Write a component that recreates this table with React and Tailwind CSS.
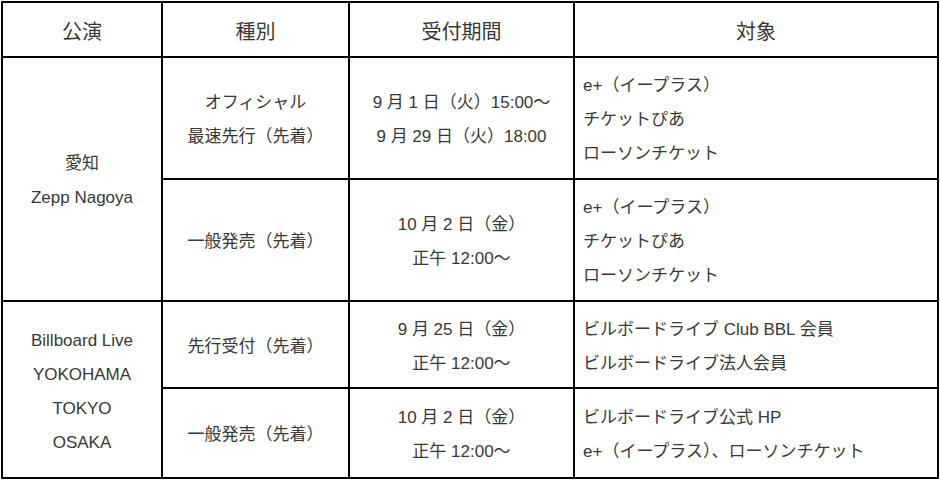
import React from "react";

const F = { fontFamily: '"Liberation Sans", "Noto Sans CJK JP", "Noto Sans", sans-serif' };

function Lines({ items }) {
  return (
    <div className="flex flex-col">
      {items.map((t, i) => (
        <div key={i} className="leading-[34px] whitespace-nowrap">{t}</div>
      ))}
    </div>
  );
}

export default function App() {
  const td = "border-2 border-black align-middle px-0 pt-1 pb-0";
  return (
    <div className="w-[940px] h-[482px] bg-white pl-px pt-px">
      <table
        className="border-collapse table-fixed w-[936px] text-[#383838] text-[17px]"
        style={F}
      >
        <colgroup>
          <col className="w-[160px]" />
          <col className="w-[187px]" />
          <col className="w-[225px]" />
          <col className="w-[364px]" />
        </colgroup>
        <tbody>
          <tr className="h-[55px] text-[20px] text-center">
            <td className={td}>公演</td>
            <td className={td}>種別</td>
            <td className={td}>受付期間</td>
            <td className={td}>対象</td>
          </tr>
          <tr className="h-[122px]">
            <td rowSpan={2} className={td + " text-center"}>
              <Lines items={["愛知", "Zepp Nagoya"]} />
            </td>
            <td className={td + " text-center"}>
              <Lines items={["オフィシャル", "最速先行（先着）"]} />
            </td>
            <td className={td + " text-center"}>
              <Lines items={["9 月 1 日（火）15:00～", "9 月 29 日（火）18:00"]} />
            </td>
            <td className={td + " pl-2"}>
              <Lines items={["e+（イープラス）", "チケットぴあ", "ローソンチケット"]} />
            </td>
          </tr>
          <tr className="h-[122px]">
            <td className={td + " text-center"}>
              <Lines items={["一般発売（先着）"]} />
            </td>
            <td className={td + " text-center"}>
              <Lines items={["10 月 2 日（金）", "正午 12:00～"]} />
            </td>
            <td className={td + " pl-2"}>
              <Lines items={["e+（イープラス）", "チケットぴあ", "ローソンチケット"]} />
            </td>
          </tr>
          <tr className="h-[87px]">
            <td rowSpan={2} className={td + " text-center"}>
              <Lines items={["Billboard Live", "YOKOHAMA", "TOKYO", "OSAKA"]} />
            </td>
            <td className={td + " text-center"}>
              <Lines items={["先行受付（先着）"]} />
            </td>
            <td className={td + " text-center"}>
              <Lines items={["9 月 25 日（金）", "正午 12:00～"]} />
            </td>
            <td className={td + " pl-2"}>
              <Lines items={["ビルボードライブ Club BBL 会員", "ビルボードライブ法人会員"]} />
            </td>
          </tr>
          <tr className="h-[90px]">
            <td className={td + " text-center"}>
              <Lines items={["一般発売（先着）"]} />
            </td>
            <td className={td + " text-center"}>
              <Lines items={["10 月 2 日（金）", "正午 12:00～"]} />
            </td>
            <td className={td + " pl-2"}>
              <Lines items={["ビルボードライブ公式 HP", "e+（イープラス）、ローソンチケット"]} />
            </td>
          </tr>
        </tbody>
      </table>
    </div>
  );
}
